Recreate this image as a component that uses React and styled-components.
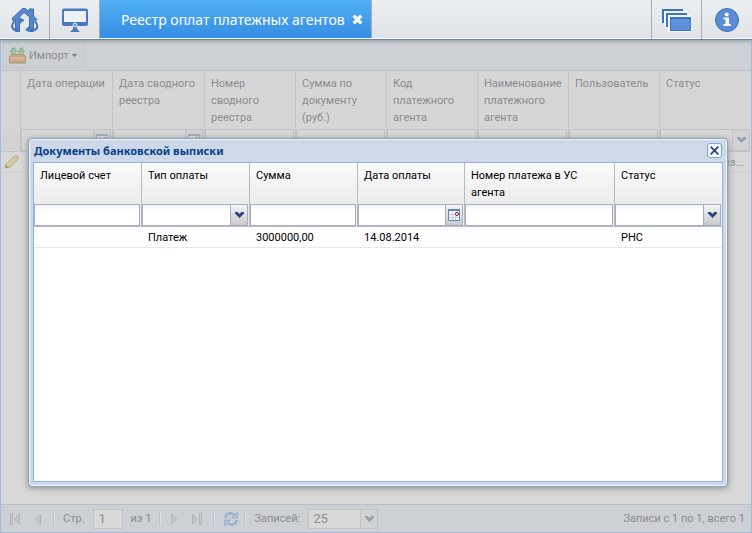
import React from "react";
import styled, { createGlobalStyle, css } from "styled-components";

const GlobalStyle = createGlobalStyle`
  *, *::before, *::after { box-sizing: border-box; }
  body {
    margin: 0;
    color: #000;
    background: #d8d8d8;
    font-family: Tahoma, Roboto, sans-serif;
    font-size: 11px;
    line-height: 17px;
  }
  button, input, select { font: inherit; color: inherit; margin: 0; border-radius: 0; }
  button { padding: 0; border: 0; background: none; cursor: pointer; }
  svg { display: block; flex: none; }
`;

const Desktop = styled.div`
  position: relative;
  display: flex;
  flex-direction: column;
  min-height: 100vh;
`;

const TaskBar = styled.header`
  position: relative;
  z-index: 1;
  display: flex;
  height: 40px;
  padding-right: 1px;
  background: linear-gradient(#ebeff2, #dfe3e6);
  border-bottom: 1px solid #5f86b3;
  box-shadow: inset 0 -1px #fff, 0 1px 4px #8f9397;
`;

const BarButton = styled.button`
  display: flex;
  align-items: center;
  justify-content: center;
  width: 50px;
  height: 39px;
  ${(p) => (p.$end ? "border-left" : "border-right")}: 1px solid #a9adb1;
`;

const Spacer = styled.div`
  flex: 1;
`;

const Tab = styled.div`
  display: flex;
  align-items: center;
  justify-content: space-between;
  width: 272px;
  height: 38px;
  padding: 0 8px 0 21px;
  color: #fff;
  font-family: Tahoma, "Noto Sans", sans-serif;
  font-size: 14px;
  white-space: nowrap;
  background: linear-gradient(#50b0f7, #3a92e3 85%, #2f8df0);
  border-right: 1px solid #a9adb1;
`;

const Workspace = styled.main`
  flex: 1;
  display: flex;
  flex-direction: column;
  color: #8b8c8e;
  border: 1px solid #a3bbdc;
  border-top: 0;
`;

const Toolbar = styled.div`
  display: flex;
  height: 31px;
  padding: 2px;
  background: #cdd1d5;
  border-bottom: 1px solid #bbc3cd;
`;

const ImportButton = styled.button`
  display: flex;
  align-items: center;
  gap: 3px;
  width: 81px;
  height: 26px;
  padding: 0 5px;
  border: 1px solid #c4c8cc;
`;

const Table = styled.table`
  width: 100%;
  table-layout: fixed;
  border-collapse: separate;
  border-spacing: 0;
`;

const HeadCell = styled.th`
  height: ${(p) => (p.$dim ? 58 : 41)}px;
  padding: 4px 6px 0;
  text-align: left;
  vertical-align: top;
  font-weight: normal;
  background: ${(p) => (p.$dim ? "#d6d6d6" : "linear-gradient(#fafafa, #ececec)")};
  border-right: 1px solid ${(p) => (p.$dim ? "#c3c5cb" : "#b9bac0")};
  &:last-child { border-right: 0; }
`;

const FilterCell = styled.td`
  height: 23px;
  padding: 0 1px 0 0;
  background: ${(p) => (p.$dim ? "#d3d3d3" : "#ececec")};
  border-right: 1px solid ${(p) => (p.$dim ? "#c3c5cb" : "#b9bac0")};
  border-bottom: 1px solid ${(p) => (p.$dim ? "#c1c3c8" : "#b9bac0")};
  &:last-child { border-right: 0; }
`;

const Cell = styled.td`
  height: 21px;
  padding: 0 0 0 6px;
  white-space: nowrap;
  border-bottom: 1px solid ${(p) => (p.$dim ? "#cfcfcf" : "#e9e9e9")};
  text-align: ${(p) => (p.$right ? "right" : "left")};
  ${(p) => p.$right && css`padding-right: 7px;`}
`;

const PencilCell = styled(Cell)`
  padding-left: 3px;
`;

const Field = styled.div`
  position: relative;
  display: flex;
  height: 22px;
  background: ${(p) => (p.$dim ? "#d8d8d8" : "linear-gradient(#eef2f5, #fff 5px)")};
  border: 1px solid ${(p) => (p.$dim ? "#bfc2ca" : "#a9adc4")};
`;

const TextBox = styled.input`
  flex: 1;
  min-width: 0;
  width: 100%;
  padding: 0 5px;
  border: 0;
  background: transparent;
`;

const DropDown = styled.select`
  flex: 1;
  min-width: 0;
  width: 100%;
  padding: 0 4px;
  border: 0;
  background: transparent;
  appearance: none;
`;

const triggerStyle = css`
  display: flex;
  align-items: center;
  justify-content: center;
  width: 17px;
  flex: none;
  background: ${(p) => (p.$dim ? "#d2d2d3" : "linear-gradient(#f4f4f4, #c9cacc)")};
  border-left: 1px solid ${(p) => (p.$dim ? "#bfc2ca" : "#a9adc4")};
`;

const Arrow = styled.span`
  ${triggerStyle}
  position: absolute;
  top: 0;
  right: 0;
  bottom: 0;
  pointer-events: none;
`;

const DateButton = styled.button`
  ${triggerStyle}
`;

const Pager = styled.footer`
  display: flex;
  align-items: center;
  height: 28px;
  margin-top: auto;
  padding: 0 6px 0 8px;
  background: #cdd1d5;
  border-top: 1px solid #b9bfc9;
`;

const PageButton = styled.button`
  display: flex;
  justify-content: center;
  width: ${(p) => p.$w}px;
`;

const Divider = styled.span`
  width: 2px;
  height: 14px;
  margin: 0 8px 0 ${(p) => p.$before}px;
  background: linear-gradient(90deg, #b4c2d4 50%, #dbdfe3 50%);
`;

const PageField = styled(Field)`
  width: ${(p) => p.$w}px;
  height: 20px;
  margin: 0 8px;
  font-size: 13px;
`;

const Dialog = styled.section`
  position: absolute;
  z-index: 2;
  top: 138px;
  right: 24px;
  bottom: 46px;
  left: 28px;
  display: flex;
  flex-direction: column;
  padding: 0 4px 4px;
  background: #cdd9e8;
  border: 1px solid #86a3c5;
  border-radius: 4px;
  box-shadow: inset 0 0 0 1px #f0f5fb, 0 1px 6px #8a8a8a;
`;

const DialogBar = styled.div`
  display: flex;
  align-items: center;
  justify-content: space-between;
  height: 23px;
  padding: 0 1px;
`;

const DialogTitle = styled.h1`
  margin: 0;
  color: #04408c;
  font-family: Tahoma, "Noto Sans", sans-serif;
  font-size: 11px;
  font-weight: bold;
`;

const CloseButton = styled.button`
  display: flex;
  align-items: center;
  justify-content: center;
  width: 15px;
  height: 15px;
  background: #f3f8fe;
  border: 1px solid #7ba3d6;
  border-radius: 3px;
`;

const DialogBody = styled.div`
  flex: 1;
  background: #fff;
  border: 1px solid #8fb2de;
`;

const HomeIcon = () => (
  <svg width="28" height="26" viewBox="0 0 28 26">
    <path d="M1 11.500L11.500 1.500h3l3.500 3.500V2h4.500v7l3.500 3.500-1.500 1.500H22.500V24.500h-4V10L13 5.500 8.500 10v14.500H4.500V13.500H2z" fill="#5688cf" stroke="#3c6cb4" />
    <path d="M3.500 14.500c-3.500 3-3 7 .5 8.500M8 13.500c2-.5 3.500-.5 5 0" fill="none" stroke="#4273bb" strokeWidth="2" />
    <path d="M8 10l5 3-4 4zM5 18l4 3-4 4z" fill="#4a7cc4" />
    <path d="M24 14.500c3.500 3 3 7-.5 8.500h-7" fill="none" stroke="#4273bb" strokeWidth="2" />
    <path d="M18 19l-4 4 4 2z" fill="#4a7cc4" />
  </svg>
);

const MonitorIcon = () => (
  <svg width="28" height="26" viewBox="0 0 28 26">
    <path d="M1 3.500Q1 1.500 3 1.500H25Q27 1.500 27 3.500V17Q27 19 25 19H3Q1 19 1 17z" fill="#4778c0" />
    <path d="M3 4h22v11H3z" fill="#edf1f3" />
    <path d="M12 18h4v4l3 3H9l3-3z" fill="#4778c0" />
    <circle cx="14" cy="18" r="2" fill="#6795d5" stroke="#e8eef5" />
  </svg>
);

const WindowsIcon = () => (
  <svg width="30" height="24" viewBox="0 0 30 24">
    <path d="M0 1h21v14H0z" fill="#3c70b9" />
    <path d="M2 3h24v16H2z" fill="#f3f6f8" />
    <path d="M4 5h21v14H4z" fill="#4074bd" />
    <path d="M6 7h24v17H6z" fill="#f3f6f8" />
    <path d="M8 9h21v14H8z" fill="#3f72ba" />
    <path d="M9 11h19v11H9z" fill="#5d92d8" />
  </svg>
);

const InfoIcon = () => (
  <svg width="26" height="26" viewBox="0 0 26 26">
    <circle cx="13" cy="13" r="11.500" fill="#5a8dd4" stroke="#3c70b8" />
    <circle cx="12.700" cy="7.500" r="2" fill="#f4f7fa" />
    <path d="M9.500 10.500h5.500v6.500h2v2H9.500v-2h2v-4.500h-2z" fill="#f4f7fa" />
  </svg>
);

const ImportIcon = () => (
  <svg width="17" height="17" viewBox="0 0 17 17">
    <path d="M.5 9.500l2-2h12l2 2v6.500H.5z" fill="#caa886" stroke="#a8947f" />
    <path d="M1 10.500h15v2H1z" fill="#d7bda2" />
    <path d="M3 1h3v3h2l-3.500 4L1 4h2zM11 1h3v3h2l-3.500 4L9 4h2z" fill="#a2c49b" stroke="#87ad84" strokeWidth=".8" />
  </svg>
);

const PencilIcon = () => (
  <svg width="16" height="16" viewBox="0 0 16 16">
    <path d="M1 14l1-4L11 2l3 3-8 8z" fill="#d6cba4" stroke="#b7a982" />
    <path d="M11 2l3 3 1-1V2l-2-1z" fill="#c1b6b0" />
    <path d="M1 14l1-3 2 2z" fill="#969492" />
  </svg>
);

const Chevron = ({ $dim }) => (
  <svg width="9" height="6" viewBox="0 0 9 6">
    <path d="M0 0h2.500l2 2 2-2H9v1.500L4.500 6 0 1.500z" fill={$dim ? "#969eb1" : "#27457f"} />
  </svg>
);

const CalendarIcon = ({ $dim }) => (
  <svg width="12" height="12" viewBox="0 0 12 12" opacity={$dim ? 0.45 : 1}>
    <path d="M.5 .5h11v11H.5z" fill="#f3f4f6" stroke="#6086b5" />
    <path d="M0 0h12v2H0z" fill="#6086b5" />
    <path d="M4.500 3v8M7.500 3v8M1 5.500h10M1 8.500h10" stroke="#ccd0d6" />
    <circle cx="9" cy="5" r="1.500" fill="#fff" stroke="#8b1f28" />
  </svg>
);

const CrossIcon = ({ size, color, weight }) => (
  <svg width={size} height={size} viewBox="0 0 10 10">
    <path d="M1.500 1.500l7 7M8.500 1.500l-7 7" stroke={color} strokeWidth={weight} />
  </svg>
);

const CaretIcon = () => (
  <svg width="5" height="3" viewBox="0 0 5 3">
    <path d="M0 0h5L2.500 3z" fill="#77797b" />
  </svg>
);

const StepIcon = ({ back, edge }) => (
  <svg width="12" height="12" viewBox="0 0 12 12">
    <g transform={back ? "translate(12 0) scale(-1 1)" : undefined}>
      <path d="M1.500 1v10L6.500 6z" fill="#c3c7cb" stroke="#b0b4b8" />
      {edge && <path d="M8.500 .5h2v11h-2z" fill="#c9cdd0" stroke="#b0b4b8" />}
    </g>
  </svg>
);

const RefreshIcon = () => (
  <svg width="16" height="16" viewBox="0 0 16 16">
    <path d="M2.500 7C3 1.500 9 1 12 4.500M13.500 9C13 14.500 7 15 4 11.500" fill="none" stroke="#98b4ce" strokeWidth="2.500" />
    <path d="M14.500 1v6h-6zM1.500 15V9h6z" fill="#abc3d8" stroke="#92afca" strokeWidth=".8" />
  </svg>
);

function Filter({ kind, label, dim }) {
  return (
    <Field $dim={dim}>
      {kind === "select" ? (
        <>
          <DropDown aria-label={label} defaultValue=""><option value="" /></DropDown>
          <Arrow $dim={dim}><Chevron $dim={dim} /></Arrow>
        </>
      ) : (
        <TextBox aria-label={label} />
      )}
      {kind === "date" && (
        <DateButton $dim={dim} aria-label={`${label}: календарь`}><CalendarIcon $dim={dim} /></DateButton>
      )}
    </Field>
  );
}

const registryColumns = [
  { title: "Дата операции", kind: "date", width: 92 },
  { title: "Дата сводного реестра", kind: "date", width: 92 },
  { title: "Номер сводного реестра", kind: "text", width: 91 },
  { title: "Сумма по документу (руб.)", kind: "text", width: 91 },
  { title: "Код платежного агента", kind: "text", width: 91 },
  { title: "Наименование платежного агента", kind: "text", width: 91 },
  { title: "Пользователь", kind: "text", width: 91 },
  { title: "Статус", kind: "select" },
];

const documentColumns = [
  { title: "Лицевой счет", kind: "text", width: 108, value: "" },
  { title: "Тип оплаты", kind: "select", width: 108, value: "Платеж" },
  { title: "Сумма", kind: "text", width: 108, value: "3000000,00" },
  { title: "Дата оплаты", kind: "date", width: 107, value: "14.08.2014" },
  { title: "Номер платежа в УС агента", kind: "text", width: 150, value: "" },
  { title: "Статус", kind: "select", value: "РНС" },
];

function Columns({ items, lead }) {
  return (
    <colgroup>
      {lead && <col width={lead} />}
      {items.map((c) => <col key={c.title} width={c.width} />)}
    </colgroup>
  );
}

function Registry() {
  return (
    <Table>
      <Columns items={registryColumns} lead={20} />
      <thead>
        <tr>
          <HeadCell $dim />
          {registryColumns.map((c) => <HeadCell key={c.title} $dim>{c.title}</HeadCell>)}
        </tr>
        <tr>
          <FilterCell $dim />
          {registryColumns.map((c) => (
            <FilterCell key={c.title} $dim><Filter kind={c.kind} label={c.title} dim /></FilterCell>
          ))}
        </tr>
      </thead>
      <tbody>
        <tr>
          <PencilCell $dim><PencilIcon /></PencilCell>
          <Cell $dim colSpan={7} />
          <Cell $dim $right>Без рез...</Cell>
        </tr>
      </tbody>
    </Table>
  );
}

function DocumentsDialog() {
  return (
    <Dialog role="dialog" aria-labelledby="documents-title">
      <DialogBar>
        <DialogTitle id="documents-title">Документы банковской выписки</DialogTitle>
        <CloseButton aria-label="Закрыть"><CrossIcon size={11} color="#24427f" weight={1.5} /></CloseButton>
      </DialogBar>
      <DialogBody>
        <Table>
          <Columns items={documentColumns} />
          <thead>
            <tr>{documentColumns.map((c) => <HeadCell key={c.title}>{c.title}</HeadCell>)}</tr>
            <tr>
              {documentColumns.map((c) => (
                <FilterCell key={c.title}><Filter kind={c.kind} label={c.title} /></FilterCell>
              ))}
            </tr>
          </thead>
          <tbody>
            <tr>{documentColumns.map((c) => <Cell key={c.title}>{c.value}</Cell>)}</tr>
          </tbody>
        </Table>
      </DialogBody>
    </Dialog>
  );
}

export default function App() {
  return (
    <>
      <GlobalStyle />
      <Desktop>
        <TaskBar>
          <BarButton aria-label="Главная"><HomeIcon /></BarButton>
          <BarButton aria-label="Рабочий стол"><MonitorIcon /></BarButton>
          <Tab>
            <span>Реестр оплат платежных агентов</span>
            <button aria-label="Закрыть вкладку"><CrossIcon size={11} color="#fff" weight={3} /></button>
          </Tab>
          <Spacer />
          <BarButton $end aria-label="Окна"><WindowsIcon /></BarButton>
          <BarButton $end aria-label="Информация"><InfoIcon /></BarButton>
        </TaskBar>
        <Workspace>
          <Toolbar>
            <ImportButton><ImportIcon />Импорт<CaretIcon /></ImportButton>
          </Toolbar>
          <Registry />
          <Pager>
            <PageButton $w={12} aria-label="Первая страница"><StepIcon back edge /></PageButton>
            <PageButton $w={30} aria-label="Предыдущая страница"><StepIcon back /></PageButton>
            <Divider $before={2} />
            <label htmlFor="page">Стр.</label>
            <PageField $dim $w={30}><TextBox id="page" defaultValue="1" /></PageField>
            <span>из 1</span>
            <Divider $before={8} />
            <PageButton $w={14} aria-label="Следующая страница"><StepIcon /></PageButton>
            <PageButton $w={28} aria-label="Последняя страница"><StepIcon edge /></PageButton>
            <Divider $before={2} />
            <PageButton $w={16} aria-label="Обновить"><RefreshIcon /></PageButton>
            <Divider $before={5} />
            <label htmlFor="size">Записей:</label>
            <PageField $dim $w={70}>
              <DropDown id="size" defaultValue="25"><option>25</option></DropDown>
              <Arrow $dim><Chevron $dim /></Arrow>
            </PageField>
            <Spacer />
            <span>Записи с 1 по 1, всего 1</span>
          </Pager>
        </Workspace>
        <DocumentsDialog />
      </Desktop>
    </>
  );
}
